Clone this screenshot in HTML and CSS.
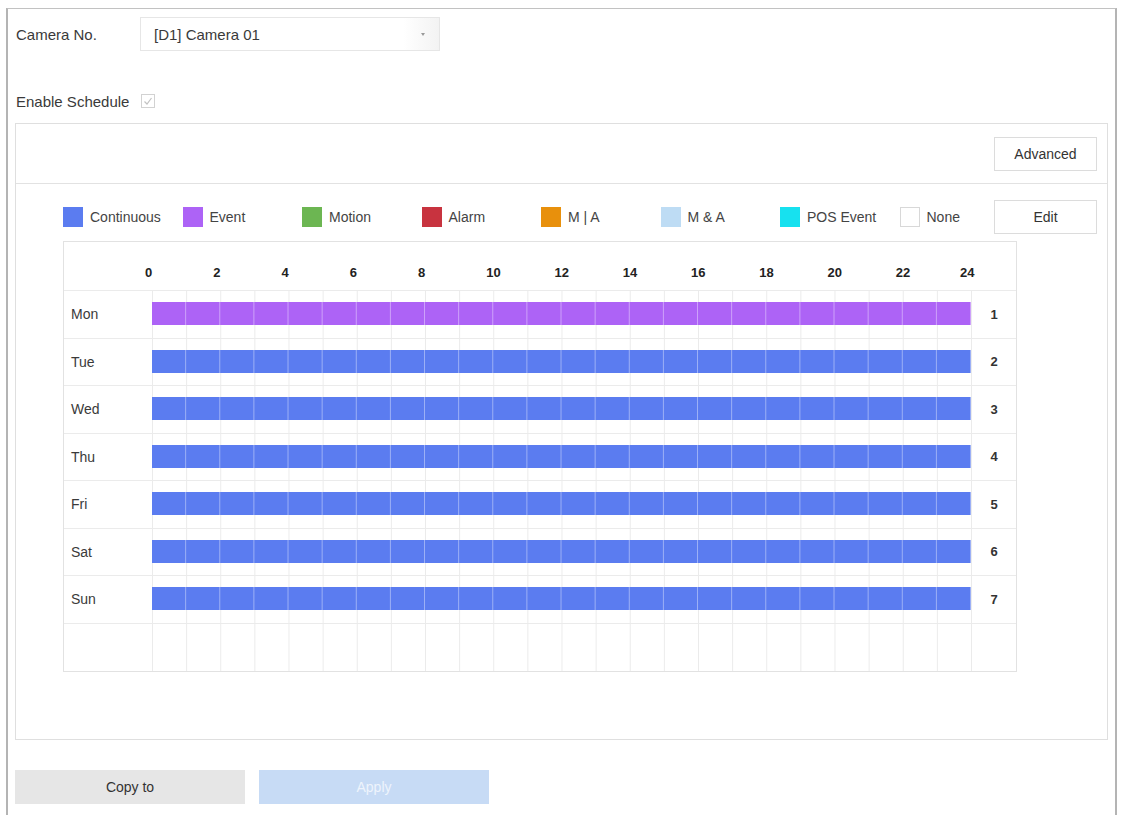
FILE: index.html
```html
<!DOCTYPE html>
<html lang="en">
<head>
  <meta charset="UTF-8" />
  <meta name="viewport" content="width=device-width, initial-scale=1.0" />
  <title>Recording Schedule</title>
  <link rel="stylesheet" href="styles.css">
</head>
<body>

  <div class="frame">
    <div class="field-row camera-row">
      <span class="field-label">Camera No.</span>
      <div class="select">
        <span>[D1] Camera 01</span>
        <span class="select-arrow"></span>
      </div>
    </div>

    <div class="field-row enable-row">
      <span class="field-label">Enable Schedule</span>
      <span class="checkbox">
        <svg width="12" height="12" viewBox="0 0 12 12"><polyline points="2.5,6.5 5,9 9.5,3" fill="none" stroke="#c2c2c2" stroke-width="1.2" /></svg>
      </span>
    </div>

    <div class="panel">
      <div class="panel-toolbar">
        <button class="btn">Advanced</button>
      </div>

      <div class="legend-row">
        <ul class="legend">
          <li><i class="swatch continuous"></i>Continuous</li>
          <li><i class="swatch event"></i>Event</li>
          <li><i class="swatch motion"></i>Motion</li>
          <li><i class="swatch alarm"></i>Alarm</li>
          <li><i class="swatch m-or-a"></i>M | A</li>
          <li><i class="swatch m-and-a"></i>M &amp; A</li>
          <li><i class="swatch pos"></i>POS Event</li>
          <li><i class="swatch none"></i>None</li>
        </ul>
        <button class="btn">Edit</button>
      </div>

      <div class="schedule">
        <div class="sched-row sched-head">
          <div class="day"></div>
          <div class="hours">
            <span>0</span><span>2</span><span>4</span><span>6</span><span>8</span><span>10</span>
            <span>12</span><span>14</span><span>16</span><span>18</span><span>20</span><span>22</span>
          </div>
          <div class="num"><span class="last-hour">24</span></div>
        </div>
        <div class="sched-row">
          <div class="day">Mon</div>
          <div class="track"><div class="bar event"></div></div>
          <div class="num">1</div>
        </div>
        <div class="sched-row">
          <div class="day">Tue</div>
          <div class="track"><div class="bar continuous"></div></div>
          <div class="num">2</div>
        </div>
        <div class="sched-row">
          <div class="day">Wed</div>
          <div class="track"><div class="bar continuous"></div></div>
          <div class="num">3</div>
        </div>
        <div class="sched-row">
          <div class="day">Thu</div>
          <div class="track"><div class="bar continuous"></div></div>
          <div class="num">4</div>
        </div>
        <div class="sched-row">
          <div class="day">Fri</div>
          <div class="track"><div class="bar continuous"></div></div>
          <div class="num">5</div>
        </div>
        <div class="sched-row">
          <div class="day">Sat</div>
          <div class="track"><div class="bar continuous"></div></div>
          <div class="num">6</div>
        </div>
        <div class="sched-row">
          <div class="day">Sun</div>
          <div class="track"><div class="bar continuous"></div></div>
          <div class="num">7</div>
        </div>
        <div class="sched-row sched-empty">
          <div class="day"></div>
          <div class="track"></div>
          <div class="num"></div>
        </div>
      </div>
    </div>

    <div class="actions">
      <button class="btn-wide copy">Copy to</button>
      <button class="btn-wide apply">Apply</button>
    </div>
  </div>

</body>
</html>
```

FILE: styles.css
```css
* { box-sizing: border-box; }
:root {
  --continuous: #5b7cf0;
  --event: #ad63f6;
  --motion: #6cb652;
  --alarm: #c8333f;
  --m-or-a: #e8900c;
  --m-and-a: #bedcf4;
  --pos: #17e1ef;
  --grid-line: #ebebeb;
  --hour: 34.125px;
}
html, body {
  margin: 0;
  overflow: hidden;
}
body {
  font-family: "Liberation Sans", Arial, sans-serif;
  color: #333;
  background: #fff;
}
.frame {
  margin: 8px 4px 0 6px;
  height: calc(100vh - 8px);
  border: 1px solid #c2c2c2;
  border-left: 2px solid #b4b4b4;
  border-right: 2px solid #b4b4b4;
  border-bottom: none;
  padding: 0 7px;
}

/* top fields */
.field-row {
  display: flex;
  align-items: center;
  height: 34px;
  font-size: 15px;
  color: #3a3a3a;
}
.field-label {
  padding-left: 1px;
}
.camera-row {
  margin-top: 8px;
}
.camera-row .field-label {
  width: 125px;
}
.enable-row {
  margin-top: 33px;
}
.select {
  width: 300px;
  height: 34px;
  display: flex;
  align-items: center;
  justify-content: space-between;
  padding: 0 14px 0 13px;
  border: 1px solid #e6e6e6;
  background: linear-gradient(to right, #fff 0, #fff 88%, #f3f3f3 100%);
}
.select-arrow {
  width: 0;
  height: 0;
  border-left: 2.5px solid transparent;
  border-right: 2.5px solid transparent;
  border-top: 3px solid #999;
}
.checkbox {
  width: 14px;
  height: 14px;
  margin-left: 12px;
  border: 1px solid #d2d2d2;
  display: flex;
  align-items: center;
  justify-content: center;
}

/* schedule panel */
.panel {
  margin-top: 5px;
  border: 1px solid #dfdfdf;
  padding-bottom: 67px;
}
.panel-toolbar {
  height: 60px;
  display: flex;
  align-items: center;
  justify-content: flex-end;
  padding: 0 10px;
  border-bottom: 1px solid #e2e2e2;
}
.btn {
  width: 103px;
  height: 34px;
  border: 1px solid #dcdcdc;
  background: #fff;
  font-family: inherit;
  font-size: 14px;
  color: #333;
  padding: 0;
}
.legend-row {
  display: flex;
  align-items: center;
  justify-content: space-between;
  padding: 16px 10px 0 47px;
}
.legend {
  list-style: none;
  margin: 0;
  padding: 0;
  display: flex;
  font-size: 14px;
  color: #444;
}
.legend li {
  width: 119.5px;
  display: flex;
  align-items: center;
  gap: 7px;
}
.legend li:last-child {
  width: auto;
}
.swatch {
  width: 20px;
  height: 20px;
  display: inline-block;
}
.swatch.continuous { background: var(--continuous); }
.swatch.event { background: var(--event); }
.swatch.motion { background: var(--motion); }
.swatch.alarm { background: var(--alarm); }
.swatch.m-or-a { background: var(--m-or-a); }
.swatch.m-and-a { background: var(--m-and-a); }
.swatch.pos { background: var(--pos); }
.swatch.none { background: #fff; border: 1px solid #d8d8d8; }

/* week grid */
.schedule {
  width: 954px;
  margin: 7px 0 0 47px;
  border: 1px solid #e2e2e2;
}
.sched-row {
  display: grid;
  grid-template-columns: 88px 819px 45px;
  height: 47.5px;
  font-size: 14px;
  color: #3a3a3a;
}
.sched-row + .sched-row {
  border-top: 1px solid var(--grid-line);
}
.sched-head {
  height: 48px;
  padding-top: 12px;
  font-size: 13px;
  font-weight: bold;
  color: #222;
}
.sched-empty {
  height: 48.5px;
}
.day {
  display: flex;
  align-items: center;
  padding-left: 7px;
}
.hours {
  display: grid;
  grid-template-columns: repeat(12, 1fr);
  align-items: center;
}
.hours span {
  margin-left: -7px;
}
.sched-head .num {
  display: flex;
  align-items: center;
}
.last-hour {
  margin-left: -11px;
}
/* one faint line at the start of every hour */
.track {
  padding-top: 11px;
  background-image: linear-gradient(to right, var(--grid-line) 1px, transparent 1px);
  background-size: var(--hour) 100%;
}
.bar {
  height: 23px;
  background-image: linear-gradient(to left, rgba(255, 255, 255, 0.4) 1px, transparent 1px);
  background-size: var(--hour) 100%;
}
.bar.continuous { background-color: var(--continuous); }
.bar.event { background-color: var(--event); }
.sched-row:not(.sched-head) .num {
  border-left: 1px solid var(--grid-line);
  display: flex;
  align-items: center;
  justify-content: center;
  font-size: 13px;
  font-weight: bold;
  color: #333;
}

/* bottom actions */
.actions {
  display: flex;
  gap: 14px;
  margin-top: 30px;
}
.btn-wide {
  width: 230px;
  height: 34px;
  border: none;
  font-family: inherit;
  font-size: 14px;
  padding: 0;
}
.btn-wide.copy {
  background: #e6e6e6;
  color: #333;
}
.btn-wide.apply {
  background: #c7dbf5;
  color: #eef4fc;
}
```
